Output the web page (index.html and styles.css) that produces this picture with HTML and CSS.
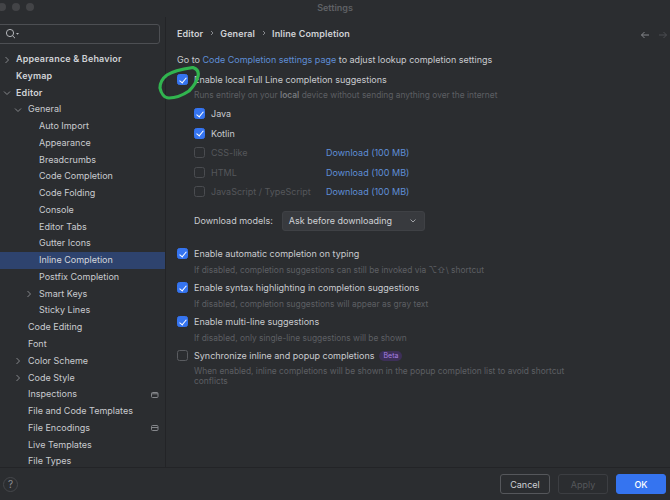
FILE: index.html
```html
<!DOCTYPE html>
<html lang="en">
<head>
<meta charset="utf-8">
<title>Settings</title>
<link rel="stylesheet" href="styles.css">
</head>
<body>
<div class="window">
  <header class="titlebar">
    <div class="lights"><i></i><i></i><i></i></div>
    <div class="title">Settings</div>
  </header>
  <div class="main">
    <aside class="sidebar">
      <div class="search">
        <svg width="14" height="12" viewBox="0 0 14 12"><circle cx="5" cy="5" r="3.6" fill="none" stroke="#b4b6ba" stroke-width="1"/><path d="M7.6 7.8 10 10.2" stroke="#b4b6ba" fill="none"/><path d="M11 5h3l-1.500 1.700z" fill="#b4b6ba"/></svg>
      </div>
      <nav class="tree">
        <div class="row l0 bold"><svg class="chev" viewBox="0 0 8 8"><path d="M2.500 1 5.500 4 2.500 7"/></svg>Appearance &amp; Behavior</div>
        <div class="row l0 bold">Keymap</div>
        <div class="row l0 bold"><svg class="chev" viewBox="0 0 8 8"><path d="M1 2.500 4 5.500 7 2.500"/></svg>Editor</div>
        <div class="row l1"><svg class="chev" viewBox="0 0 8 8"><path d="M1 2.500 4 5.500 7 2.500"/></svg>General</div>
        <div class="row l2">Auto Import</div>
        <div class="row l2">Appearance</div>
        <div class="row l2">Breadcrumbs</div>
        <div class="row l2">Code Completion</div>
        <div class="row l2">Code Folding</div>
        <div class="row l2">Console</div>
        <div class="row l2">Editor Tabs</div>
        <div class="row l2">Gutter Icons</div>
        <div class="row l2 selected">Inline Completion</div>
        <div class="row l2">Postfix Completion</div>
        <div class="row l2"><svg class="chev" viewBox="0 0 8 8"><path d="M2.500 1 5.500 4 2.500 7"/></svg>Smart Keys</div>
        <div class="row l2">Sticky Lines</div>
        <div class="row l1">Code Editing</div>
        <div class="row l1">Font</div>
        <div class="row l1"><svg class="chev" viewBox="0 0 8 8"><path d="M2.500 1 5.500 4 2.500 7"/></svg>Color Scheme</div>
        <div class="row l1"><svg class="chev" viewBox="0 0 8 8"><path d="M2.500 1 5.500 4 2.500 7"/></svg>Code Style</div>
        <div class="row l1">Inspections<svg class="scope" viewBox="0 0 8 6"><rect x=".5" y=".5" width="6.500" height="5" rx="1"/><path d="M.5 1.800H7"/></svg></div>
        <div class="row l1">File and Code Templates</div>
        <div class="row l1">File Encodings<svg class="scope" viewBox="0 0 8 6"><rect x=".5" y=".5" width="6.500" height="5" rx="1"/><path d="M.5 2.500H7"/></svg></div>
        <div class="row l1">Live Templates</div>
        <div class="row l1">File Types</div>
      </nav>
    </aside>
    <main class="content">
      <div class="crumbs">
        <span>Editor</span><svg class="sep" viewBox="0 0 6 6"><path d="M2 1 4 3 2 5"/></svg>
        <span>General</span><svg class="sep" viewBox="0 0 6 6"><path d="M2 1 4 3 2 5"/></svg>
        <span>Inline Completion</span>
        <div class="nav-arrows">
          <svg width="10" height="8" viewBox="0 0 10 8"><path d="M9 4H1.500M4.500 1 1.500 4l3 3" class="back"/></svg>
          <svg width="10" height="8" viewBox="0 0 10 8"><path d="M1 4h7.500M5.500 1l3 3-3 3" class="fwd"/></svg>
        </div>
      </div>
      <p class="goto">Go to <a>Code Completion settings page</a> to adjust lookup completion settings</p>

      <label class="opt first"><span class="box on"></span>Enable local Full Line completion suggestions</label>
      <p class="hint h-first">Runs entirely on your <b>local</b> device without sending anything over the internet</p>

      <div class="langs">
        <label class="lang"><span class="box on"></span>Java</label>
        <label class="lang"><span class="box on"></span>Kotlin</label>
        <label class="lang off"><span class="box"></span><span class="name">CSS-like</span><a>Download (100 MB)</a></label>
        <label class="lang off"><span class="box"></span><span class="name">HTML</span><a>Download (100 MB)</a></label>
        <label class="lang off"><span class="box"></span><span class="name">JavaScript / TypeScript</span><a>Download (100 MB)</a></label>
      </div>

      <div class="models">
        <span>Download models:</span>
        <div class="select">Ask before downloading<svg width="8" height="6" viewBox="0 0 8 6"><path d="M1.500 1.500 4 4l2.500-2.500"/></svg></div>
      </div>

      <label class="opt"><span class="box on"></span>Enable automatic completion on typing</label>
      <p class="hint">If disabled, completion suggestions can still be invoked via ⌥⇧\ shortcut</p>
      <label class="opt"><span class="box on"></span>Enable syntax highlighting in completion suggestions</label>
      <p class="hint">If disabled, completion suggestions will appear as gray text</p>
      <label class="opt"><span class="box on"></span>Enable multi-line suggestions</label>
      <p class="hint">If disabled, only single-line suggestions will be shown</p>
      <label class="opt"><span class="box plain"></span>Synchronize inline and popup completions<span class="beta">Beta</span></label>
      <p class="hint wrap">When enabled, inline completions will be shown in the popup completion list to avoid shortcut conflicts</p>
    </main>
  </div>
  <footer class="footer">
    <div class="help">?</div>
    <div class="buttons">
      <button class="btn">Cancel</button>
      <button class="btn disabled">Apply</button>
      <button class="btn primary">OK</button>
    </div>
  </footer>
  <svg class="marker" width="50" height="40" viewBox="0 0 50 40"><path d="M37 1.500C41 3 43 6 42 10 41 15 38 20 33 25 27 29 20 32 13 32 8 32 5 27 4 22 4 17 7 12 11 9 17 5 27 3 37 1.500Z" fill="none" stroke="#31b44f" stroke-width="3.200" stroke-linecap="round"/></svg>
</div>
</body>
</html>
```
FILE: styles.css
```css
* { box-sizing: border-box; }
html, body { margin: 0; height: 100%; background: #2b2d30; }
body {
  font-family: Inter, "Liberation Sans", sans-serif;
  font-size: 9px;
  color: #c9cbcf;
  overflow: hidden;
}
p { margin: 0; }
a { color: #5f8dd6; }
.window {
  position: relative;
  width: 670px;
  height: 500px;
  display: flex;
  flex-direction: column;
  overflow: hidden;
}
.titlebar {
  height: 17px;
  position: relative;
  flex: none;
}
.lights { display: flex; gap: 6px; padding-top: 3px; margin-left: -2px; }
.lights i { width: 8px; height: 8px; border-radius: 50%; background: #434447; }
.title {
  position: absolute;
  left: 0; right: 0; top: 1.500px;
  text-align: center;
  font-weight: 600;
  color: #5f6165;
  line-height: 12px;
}
.main { flex: 1; display: flex; min-height: 0; }
.sidebar {
  width: 166px;
  flex: none;
  border-right: 1px solid #232427;
  padding-top: 7px;
  overflow: hidden;
}
.search {
  height: 20px;
  margin-right: 5px;
  margin-left: -3px;
  border: 1px solid #4d4f53;
  border-radius: 3px;
  display: flex;
  align-items: center;
  padding-left: 7px;
}
.tree { margin-top: 7px; }
.row {
  height: 16.77px;
  line-height: 16.77px;
  position: relative;
  white-space: nowrap;
}
.l0 { padding-left: 16px; }
.l1 { padding-left: 28px; }
.l2 { padding-left: 39px; }
.bold { font-weight: 600; color: #d0d2d6; letter-spacing: .17px; }
.selected { background: #2e436e; color: #d4d7dc; }
.chev {
  position: absolute;
  top: 4.500px;
  width: 8px;
  height: 8px;
  fill: none;
  stroke: #85878b;
  stroke-width: 1;
}
.l0 .chev { left: 3px; }
.l1 .chev { left: 14px; }
.l2 .chev { left: 25px; }
.scope {
  position: absolute;
  right: 6px;
  top: 5.500px;
  width: 8px;
  height: 6px;
  fill: none;
  stroke: #85878b;
  stroke-width: 1;
}
.content {
  flex: 1;
  padding: 9px 0 0 11px;
  min-width: 0;
}
.crumbs {
  display: flex;
  align-items: center;
  height: 14px;
  font-weight: 600;
  color: #cfd1d5;
  letter-spacing: .12px;
}
.sep { width: 6px; height: 6px; margin: 0 5.500px; fill: none; stroke: #85878b; stroke-width: 1; }
.nav-arrows { margin-left: auto; display: flex; gap: 8px; padding: 3px 2px 0 0; }
.nav-arrows path { fill: none; stroke-width: 1; }
.back { stroke: #85878b; }
.fwd { stroke: #4b4d51; }
.goto { margin-top: 13px; line-height: 14px; }
.opt {
  display: flex;
  align-items: center;
  gap: 6px;
  height: 14px;
  margin-top: 4px;
  color: #c9cbcf;
}
.opt.first { margin-top: 5.500px; }
.box {
  width: 11px;
  height: 11px;
  border-radius: 2.500px;
  border: 1px solid #4a4c50;
  flex: none;
  position: relative;
}
.box.plain { border-color: #5a5c60; }
.box.on {
  background: #3574f0;
  border-color: #3574f0;
}
.box.on::after {
  content: "";
  position: absolute;
  left: 3.200px;
  top: .8px;
  width: 3px;
  height: 6px;
  border: solid #fff;
  border-width: 0 1.500px 1.500px 0;
  transform: rotate(40deg);
}
.hint {
  margin: 2px 0 4px 17px;
  line-height: 14px;
  font-size: 8.400px;
  color: #5d5f63;
  width: 390px;
}
.hint b { font-weight: 600; color: #77797d; }
.hint.h-first { margin: 1px 0 5px 17px; }
.hint.wrap { line-height: 10px; margin-top: 3px; }
.langs { padding-left: 17px; display: flex; flex-direction: column; gap: 5.600px; }
.lang {
  display: flex;
  align-items: center;
  gap: 6px;
  height: 14px;
}
.lang.off .name { width: 109px; color: #55575b; }
.models {
  display: flex;
  align-items: center;
  gap: 9px;
  margin: 12px 0 16px 17px;
}
.select {
  width: 143px;
  height: 20px;
  padding: 0 7px 0 6px;
  background: #383a3e;
  border: 1px solid #3f4145;
  border-radius: 3px;
  display: flex;
  align-items: center;
  justify-content: space-between;
  color: #cfd1d5;
}
.select path { fill: none; stroke: #a0a2a6; }
.beta {
  margin-left: -1px;
  padding: 0 4px;
  height: 10px;
  line-height: 10px;
  font-size: 7px;
  border-radius: 5px;
  background: #3d2f58;
  color: #a57fe0;
}
.footer {
  height: 33px;
  flex: none;
  border-top: 1px solid #232427;
  display: flex;
  align-items: center;
  justify-content: space-between;
  padding: 0 4px 0 3px;
}
.help {
  width: 15px;
  height: 15px;
  border: 1px solid #45474b;
  border-radius: 50%;
  display: flex;
  align-items: center;
  justify-content: center;
  color: #8a8c90;
  font-size: 10px;
}
.buttons { display: flex; gap: 8px; }
.btn {
  width: 50px;
  height: 20px;
  border-radius: 3px;
  border: 1px solid #55575b;
  background: transparent;
  color: #d0d2d6;
  font: inherit;
  padding: 0;
}
.btn.disabled { border-color: #3c3e42; color: #55575b; }
.btn.primary { background: #3574f0; border-color: #3574f0; color: #fff; font-weight: 500; }
.marker { position: absolute; left: 156px; top: 66px; }
```
